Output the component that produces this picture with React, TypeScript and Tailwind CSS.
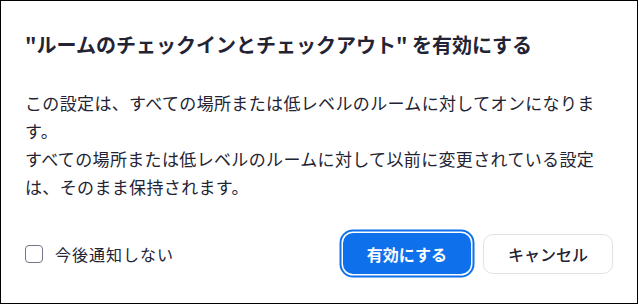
import { useState } from "react";

const font = { fontFamily: '"Noto Sans CJK JP", "Noto Sans", sans-serif' };

export default function App() {
  const [checked, setChecked] = useState(false);

  return (
    <div
      style={font}
      className="w-[638px] h-[304px] border border-black bg-white px-6 pt-[29px] text-[#232333] flex flex-col"
    >
      <h2 className="text-[20px] leading-[30px] font-bold">
        "ルームのチェックインとチェックアウト" を有効にする
      </h2>

      <div className="mt-[29px] text-[17px] leading-[28px] tracking-[0.35px]">
        <p>この設定は、すべての場所または低レベルのルームに対してオンになります。</p>
        <p>すべての場所または低レベルのルームに対して以前に変更されている設定は、そのまま保持されます。</p>
      </div>

      <div className="mt-[32px] flex items-center justify-between">
        <label className="flex items-center gap-3 cursor-pointer">
          <button
            onClick={() => setChecked(!checked)}
            className="w-[18px] h-[18px] rounded-[4px] border border-[#747487] bg-white"
          />
          <span className="text-[16px] tracking-[1px]">今後通知しない</span>
        </label>

        <div className="flex items-center gap-3">
          <button className="h-[41px] px-6 rounded-[10px] bg-[#0e71eb] text-white text-[16px] font-bold ring-2 ring-[#0e71eb] ring-offset-[1.5px] ring-offset-white">
            有効にする
          </button>
          <button className="h-[40px] w-[130px] rounded-[10px] border border-[#dfe3e8] bg-white text-[16px] font-medium">
            キャンセル
          </button>
        </div>
      </div>
    </div>
  );
}
